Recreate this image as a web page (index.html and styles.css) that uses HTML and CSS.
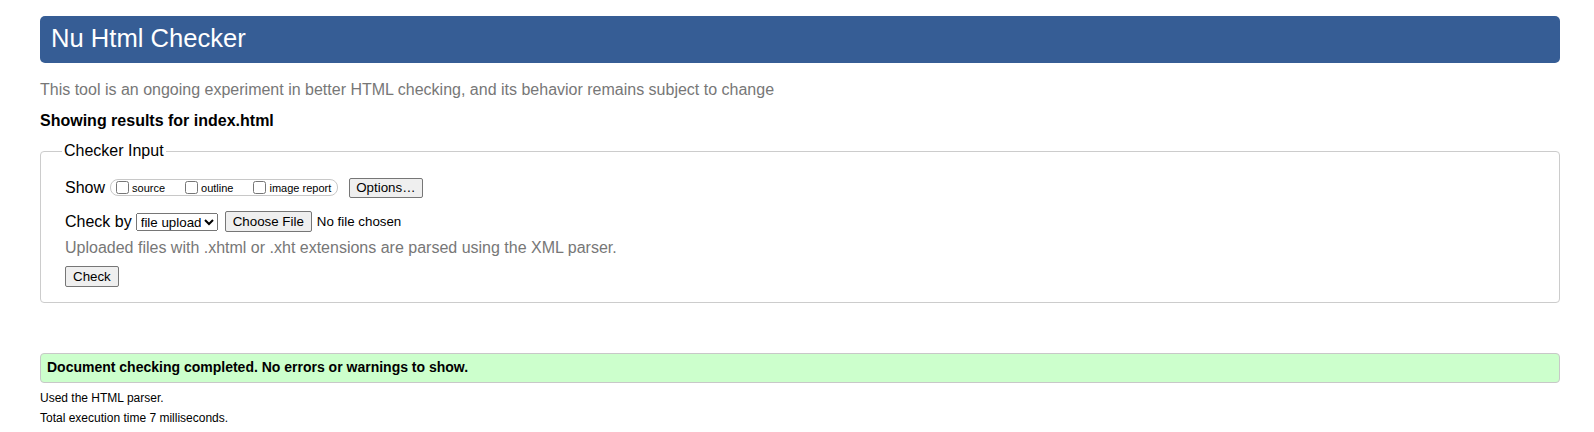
FILE: index.html
```html
<!DOCTYPE html>
<html>
<head>
<meta charset="utf-8">
<title>Nu Html Checker</title>
<link rel="stylesheet" href="styles.css">
</head>
<body>
<h1 class="title">Nu Html Checker</h1>
<p class="tagline">This tool is an ongoing experiment in better HTML checking, and its behavior remains subject to change</p>
<p class="showing">Showing results for index.html</p>
<form class="checker">
<fieldset class="input-set">
<legend class="legend">Checker Input</legend>
<div class="row show-row">
<span class="label">Show</span>
<span class="show-group">
<label class="opt"><input type="checkbox" class="cb">source</label>
<label class="opt"><input type="checkbox" class="cb">outline</label>
<label class="opt last"><input type="checkbox" class="cb">image report</label>
</span>
<button type="button" class="btn options-btn">Options…</button>
</div>
<div class="row checkby-row">
<span class="label by-label">Check by</span>
<select class="sel"><option>file upload</option></select>
<span class="btn file-btn">Choose File</span>
<span class="file-text">No file chosen</span>
</div>
<p class="note">Uploaded files with .xhtml or .xht extensions are parsed using the XML parser.</p>
<div class="row check-row"><button type="button" class="btn check-btn">Check</button></div>
</fieldset>
</form>
<div class="success">Document checking completed. No errors or warnings to show.</div>
<p class="details first">Used the HTML parser.</p>
<p class="details">Total execution time 7 milliseconds.</p>
</body>
</html>
```

FILE: styles.css
```css
html { background: #fff; }
body {
  margin: 0;
  padding: 16px 34px 16px 40px;
  font-family: "Liberation Sans", Arial, sans-serif;
  font-size: 16px;
  color: #000;
}
.title {
  margin: 0;
  background: #365d95;
  color: #fff;
  font-weight: normal;
  font-size: 25.6px;
  line-height: 31px;
  padding: 7px 11px 9px;
  border-radius: 5px;
}
.tagline {
  margin: 18px 0 0;
  color: #777;
  line-height: 18px;
}
.showing {
  margin: 13px 0 0;
  font-weight: bold;
  line-height: 18px;
}
.checker { margin: 0; }
.input-set {
  margin: 12px 0 0;
  padding: 8px 24px 15px;
  border: 1px solid #ccc;
  border-radius: 4px;
}
.legend {
  padding: 0 2px;
  margin-left: -3px;
  font-size: 16px;
  line-height: 18px;
}
.row {
  display: flex;
  align-items: center;
  height: 21px;
}
.show-row { margin-top: 9px; }
.label { font-size: 16px; margin-right: 5px; }
.by-label { margin-right: 4px; }
.show-group {
  display: inline-flex;
  align-items: center;
  border: 1px solid #c8c8c8;
  border-radius: 8px;
  padding: 0 6px 0 5px;
  height: 15px;
}
.opt {
  display: inline-flex;
  align-items: center;
  font-size: 11px;
  margin-right: 20px;
}
.opt.last { margin-right: 0; }
.cb {
  margin: 0 3px 0 0;
  width: 13px;
  height: 13px;
}
.btn {
  font-family: "Liberation Sans", Arial, sans-serif;
  font-size: 13.333px;
  line-height: 15px;
  background: #efefef;
  border: 1px solid #767676;
  border-radius: 2px;
  padding: 0 6px;
  color: #000;
  box-sizing: border-box;
  display: inline-flex;
  align-items: center;
}
.options-btn { margin-left: 11px; height: 20px; }
.checkby-row { margin-top: 13px; }
.sel {
  font-family: "Liberation Sans", Arial, sans-serif;
  font-size: 13.333px;
  height: 18px;
  width: 82px;
  padding: 0;
}
.file-btn {
  margin-left: 7px;
  height: 21px;
  padding: 0 7px;
}
.file-text { font-size: 13.333px; margin-left: 5px; }
.note {
  margin: 7px 0 0;
  color: #777;
  line-height: 18px;
}
.check-row { margin-top: 9px; }
.check-btn { height: 21px; padding: 0 7px; }
.success {
  margin-top: 50px;
  background: #ccffcc;
  border: 1px solid #c8c8c8;
  border-radius: 4px;
  padding: 5px 6px 7px;
  font-size: 14px;
  font-weight: bold;
  line-height: 16px;
}
.details {
  margin: 6px 0 0;
  font-size: 12px;
  line-height: 14px;
}
.details.first { margin-top: 8px; }
```
